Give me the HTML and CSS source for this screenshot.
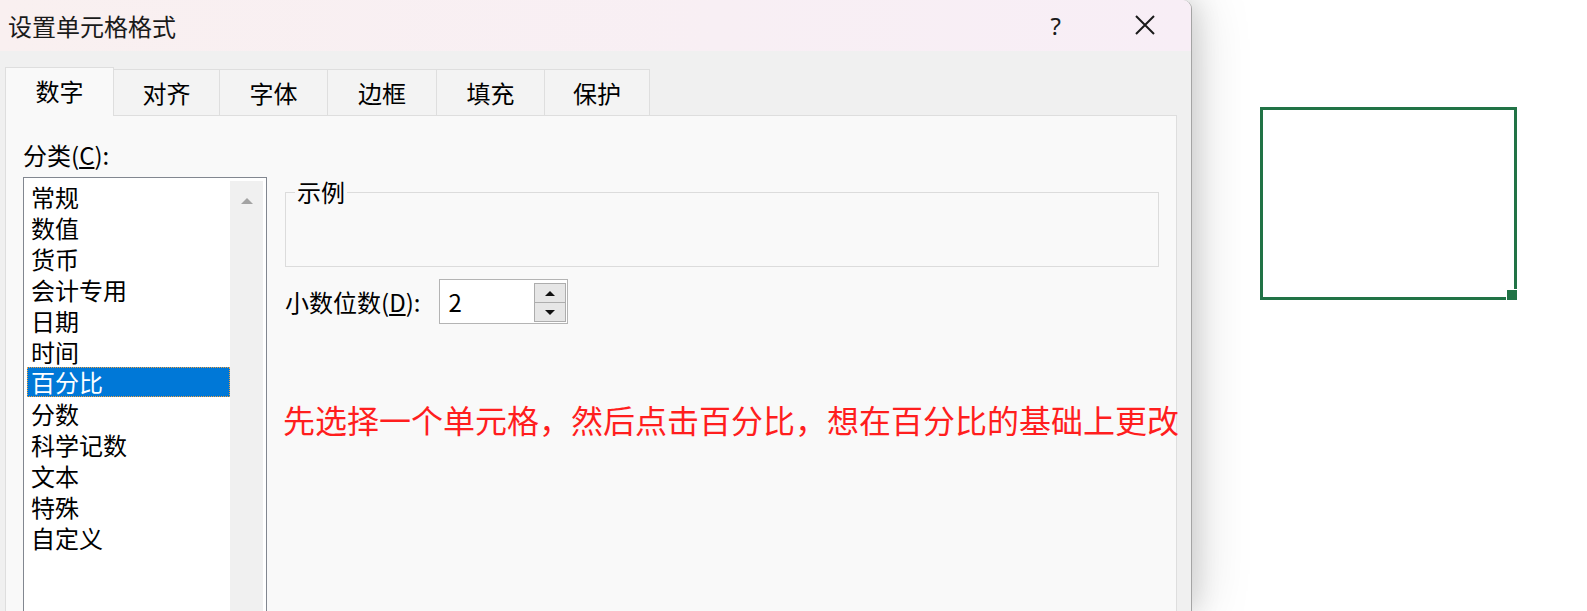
FILE: index.html
```html
<!DOCTYPE html>
<html lang="zh-CN">
<head>
<meta charset="utf-8">
<title>设置单元格格式</title>
<link rel="stylesheet" href="styles.css">
</head>
<body>
<div class="dialog">
  <div class="titlebar">
    <span class="title">设置单元格格式</span>
    <span class="help">?</span>
    <svg class="close" width="20" height="20" viewBox="0 0 20 20"><path d="M1 1 L19 19 M19 1 L1 19" stroke="#1a1a1a" stroke-width="2" fill="none"/></svg>
  </div>
  <div class="body">
    <div class="tabs">
      <div class="tab active">数字</div>
      <div class="tab">对齐</div>
      <div class="tab">字体</div>
      <div class="tab">边框</div>
      <div class="tab">填充</div>
      <div class="tab">保护</div>
    </div>
    <div class="panel">
      <div class="left">
        <div class="label">分类(<u>C</u>):</div>
        <div class="listbox">
          <ul class="items">
            <li>常规</li>
            <li>数值</li>
            <li>货币</li>
            <li>会计专用</li>
            <li>日期</li>
            <li>时间</li>
            <li class="selected">百分比</li>
            <li>分数</li>
            <li>科学记数</li>
            <li>文本</li>
            <li>特殊</li>
            <li>自定义</li>
          </ul>
          <div class="scrollbar"><span class="up"></span></div>
        </div>
      </div>
      <div class="right">
        <div class="example"><span class="legend">示例</span></div>
        <div class="decimals">
          <span class="dlabel">小数位数(<u>D</u>):</span>
          <div class="spin">
            <span class="value">2</span>
            <div class="spinbtns">
              <div class="sbtn"><span class="tri-up"></span></div>
              <div class="sbtn"><span class="tri-down"></span></div>
            </div>
          </div>
        </div>
        <div class="note">先选择一个单元格，然后点击百分比，想在百分比的基础上更改</div>
      </div>
    </div>
  </div>
</div>
<div class="sheet">
  <div class="cell"><span class="handle"></span></div>
</div>
</body>
</html>
```
FILE: styles.css
```css
* { box-sizing: border-box; }
html, body { margin: 0; padding: 0; }
body {
  width: 1587px;
  height: 611px;
  overflow: hidden;
  background: #ffffff;
  display: flex;
  font-family: "Noto Sans CJK SC", "Noto Sans", sans-serif;
  color: #000;
}
.dialog {
  width: 1192px;
  height: 611px;
  flex: none;
  background: #f0f0f0;
  border-right: 1px solid #a4a4a4;
  border-top-right-radius: 9px;
  box-shadow: 0 0 60px rgba(0,0,0,0.18), 6px 0 24px rgba(0,0,0,0.10);
  position: relative;
  z-index: 1;
  overflow: hidden;
  display: flex;
  flex-direction: column;
}
.titlebar {
  height: 51px;
  flex: none;
  display: flex;
  align-items: center;
  padding-left: 8px;
  background: linear-gradient(90deg, #f9f0f0 0%, #f8eff4 60%, #f8eef6 100%);
}
.title {
  font-size: 24px;
  line-height: 30px;
  color: #1a1a1a;
}
.help {
  margin-left: auto;
  font-family: "Noto Sans", "DejaVu Sans", sans-serif;
  font-size: 24px;
  line-height: 30px;
  color: #1a1a1a;
}
.close {
  margin-left: 74px;
  margin-right: 36px;
  margin-top: -2px;
}
.body {
  flex: 1;
  padding: 16px 14px 0 5px;
  display: flex;
  flex-direction: column;
  min-height: 0;
}
.tabs {
  display: flex;
  align-items: flex-end;
  height: 48px;
  flex: none;
}
.tab {
  width: 108px;
  height: 46px;
  background: #f3f3f3;
  border-top: 1px solid #dedede;
  border-right: 1px solid #dedede;
  display: flex;
  align-items: center;
  justify-content: center;
  font-size: 24px;
  line-height: 30px;
  color: #000;
}
.tab:nth-child(2) { width: 106px; }
.tab:nth-child(4) { width: 109px; }
.tab:nth-child(6) { width: 105px; }
.tab.active {
  width: 109px;
  height: 49px;
  margin-bottom: -1px;
  background: #f9f9f9;
  border: 1px solid #dedede;
  border-bottom: none;
  position: relative;
  z-index: 1;
  padding-bottom: 3px;
}
.panel {
  flex: 1;
  background: #f9f9f9;
  border: 1px solid #dedede;
  border-bottom: none;
  padding: 24px 0 0 17px;
  display: grid;
  grid-template-columns: 244px 1fr;
  column-gap: 18px;
  min-height: 0;
}
.left { display: flex; flex-direction: column; }
.label {
  font-size: 24px;
  line-height: 30px;
}
.listbox {
  margin-top: 7px;
  height: 480px;
  background: #fff;
  border: 1px solid #828790;
  padding: 3px;
  display: flex;
}
.items {
  list-style: none;
  margin: 0;
  padding: 0;
  width: 203px;
}
.items li {
  height: 31px;
  line-height: 31px;
  padding-left: 4px;
  font-size: 24px;
  color: #000;
  white-space: nowrap;
}
.items li.selected {
  background: #0078d7;
  color: #fff;
  outline: 1px dotted #f0a040;
  outline-offset: -1px;
  height: 30px;
  line-height: 30px;
  margin-bottom: 1px;
}
.scrollbar {
  width: 33px;
  background: #f0f0f0;
  display: flex;
  justify-content: center;
  padding-top: 17px;
}
.up {
  width: 0;
  height: 0;
  border-left: 6px solid transparent;
  border-right: 6px solid transparent;
  border-bottom: 6px solid #a3a3a3;
}
.right {
  padding-top: 52px;
  min-width: 0;
}
.example {
  position: relative;
  width: 874px;
  height: 75px;
  border: 1px solid #dcdcdc;
}
.legend {
  position: absolute;
  left: 9px;
  top: -16px;
  padding: 0 2px;
  background: #f9f9f9;
  font-size: 24px;
  line-height: 30px;
}
.decimals {
  margin-top: 12px;
  display: flex;
  align-items: center;
}
.dlabel {
  font-size: 24px;
  line-height: 30px;
}
.spin {
  margin-left: 19px;
  width: 129px;
  height: 45px;
  background: #fff;
  border: 1px solid #b4b4b4;
  display: flex;
  align-items: stretch;
  padding: 3px 1px 1px 8px;
}
.value {
  flex: 1;
  font-size: 24px;
  line-height: 38px;
}
.spinbtns {
  width: 32px;
  display: flex;
  flex-direction: column;
}
.sbtn {
  flex: 1;
  background: #e6e6e6;
  border: 1px solid #adadad;
  display: flex;
  align-items: center;
  justify-content: center;
}
.sbtn + .sbtn { border-top: none; }
.tri-up {
  width: 0; height: 0;
  border-left: 5px solid transparent;
  border-right: 5px solid transparent;
  border-bottom: 5px solid #111;
}
.tri-down {
  width: 0; height: 0;
  border-left: 5px solid transparent;
  border-right: 5px solid transparent;
  border-top: 5px solid #111;
}
.note {
  margin-top: 75px;
  margin-left: -2px;
  font-size: 32px;
  line-height: 40px;
  color: #ff1e1e;
  white-space: nowrap;
}
.sheet {
  flex: 1;
  padding: 107px 0 0 68px;
}
.cell {
  position: relative;
  width: 257px;
  height: 193px;
  border: 3px solid #217346;
  background: #fff;
}
.handle {
  position: absolute;
  right: -3px;
  bottom: -3px;
  width: 11px;
  height: 11px;
  background: #217346;
  border: 1px solid #fff;
  border-right: none;
  border-bottom: none;
}
```
